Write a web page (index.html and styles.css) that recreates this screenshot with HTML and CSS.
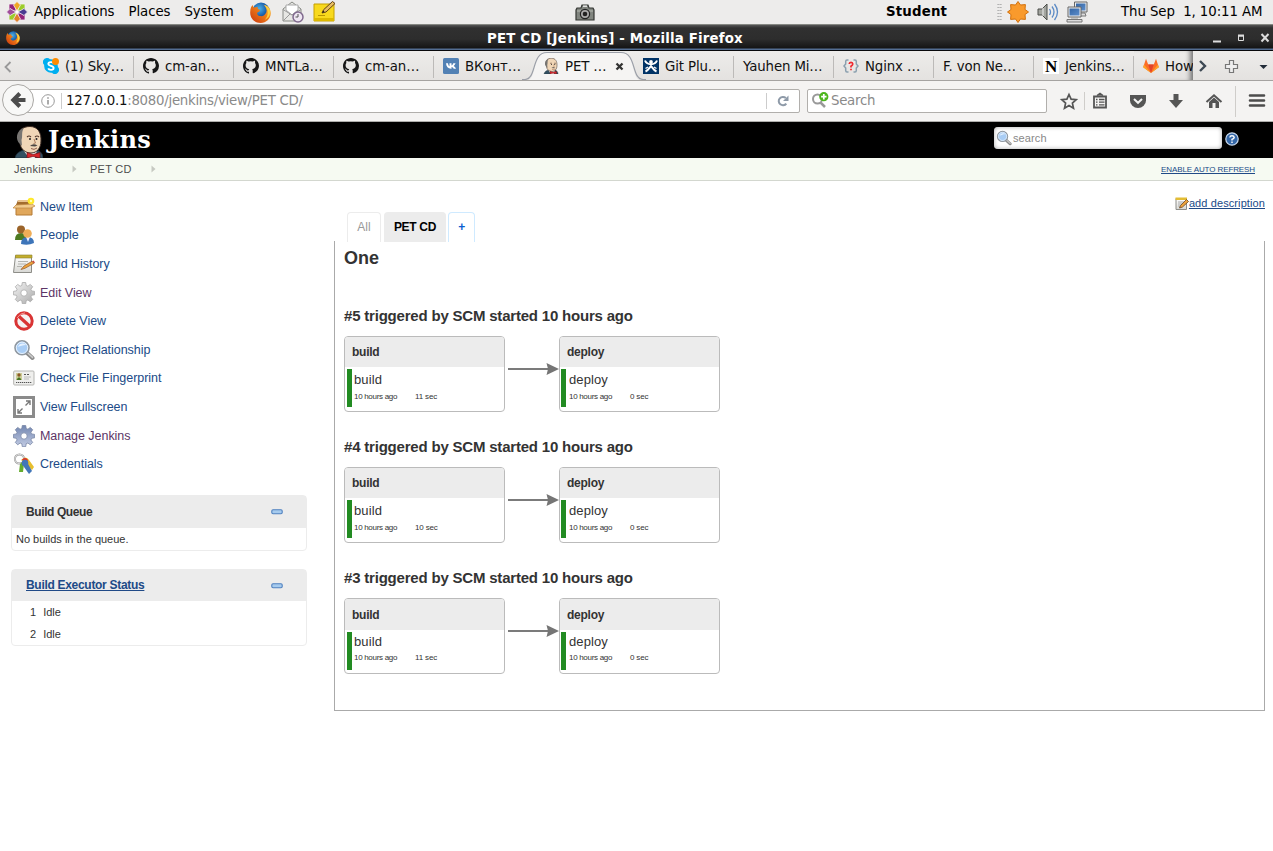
FILE: index.html
```html
<!DOCTYPE html>
<html lang="en">
<head>
<meta charset="utf-8">
<title>PET CD [Jenkins]</title>
<link rel="stylesheet" href="styles.css">
</head>
<body>
<svg class="defs" aria-hidden="true">
  <defs>
    <radialGradient id="flame" cx=".4" cy=".35" r=".7"><stop offset="0" stop-color="#4fb4e8"/><stop offset=".55" stop-color="#1c62ad"/><stop offset="1" stop-color="#123873"/></radialGradient>
    <linearGradient id="fox" x1="0" y1="1" x2="1" y2="0"><stop offset="0" stop-color="#c8330c"/><stop offset=".6" stop-color="#f08019"/><stop offset="1" stop-color="#ffdc50"/></linearGradient>
    <linearGradient id="paper" x1="0" y1="0" x2="0" y2="1"><stop offset="0" stop-color="#fff"/><stop offset="1" stop-color="#d8d8d4"/></linearGradient>
    <linearGradient id="silver" x1="0" y1="0" x2="1" y2="1"><stop offset="0" stop-color="#f4f4f4"/><stop offset="1" stop-color="#aaa"/></linearGradient>
    <linearGradient id="steel" x1="0" y1="0" x2="0" y2="1"><stop offset="0" stop-color="#7286b0"/><stop offset="1" stop-color="#c3cce4"/></linearGradient>
    <linearGradient id="screen" x1="0" y1="0" x2="1" y2="1"><stop offset="0" stop-color="#3465a4"/><stop offset="1" stop-color="#5d8ecb"/></linearGradient>
    <symbol id="firefox" viewBox="0 0 20 20">
      <circle cx="10.5" cy="9" r="8.5" fill="url(#flame)"/>
      <path d="M1 5 2.4 2.8 3.4 5.2 7.6 4.8C6.5 6.5 8.3 7.2 9.6 7.5L8.8 9.2C6 9.5 6.2 12.5 9.4 13.4 12.5 14 14 12.5 15.5 10 16.4 7 15 4.5 13 2.5 17 3.3 20 6.5 19.8 11 19.5 16 15.5 20 10.2 20 4.5 20 .3 15.8.2 10.5.1 8.3.4 6.5 1 5z" fill="url(#fox)"/>
      <path d="M14 3C18 7 18 13 14 17 18.3 15.5 20 11 18.6 7.2 17.8 5 16 3.5 14 3z" fill="#ffd03c"/>
    </symbol>
    <symbol id="octocat" viewBox="0 0 16 16">
      <path fill="#161616" d="M8 0C3.58 0 0 3.58 0 8c0 3.54 2.29 6.53 5.47 7.59.4.07.55-.17.55-.38v-1.49C4 14.1 3.4 13.1 3.2 12.5c-.1-.3-.6-1-1-1.2-.3-.2-.7-.6 0-.6.6 0 1.1.6 1.2.8.7 1.2 1.9.9 2.3.7.1-.5.3-.9.5-1.1-1.8-.2-3.6-.9-3.6-4 0-.9.3-1.6.8-2.2-.1-.2-.4-1 .1-2.1 0 0 .7-.2 2.2.8a7.6 7.6 0 0 1 4 0c1.5-1 2.2-.8 2.2-.8.4 1.1.2 1.9.1 2.1.5.6.8 1.3.8 2.2 0 3.1-1.9 3.8-3.7 4 .3.2.6.7.6 1.5v2.2c0 .2.1.5.5.4A8 8 0 0 0 16 8c0-4.42-3.58-8-8-8z"/>
    </symbol>
    <symbol id="butler" viewBox="0 0 28 32">
      <path d="M0 32C1 27 5 25 9 24L23 24C27 27 28 29 28 32z" fill="#335061" stroke="#1d2d38" stroke-width=".8"/>
      <path d="M9 25 14 32 20 32 22 24z" fill="#fff"/>
      <path d="M5 15C1 4 8 .5 15 .5 23 .5 26.500 7 26 15 26 22 22 27 16 27 10 27 6 23 5 18z" fill="#f0d6b7" stroke="#3b2a22" stroke-width="1"/>
      <path d="M5 18C0 14 1 4 9 2 6 6 8 10 6.5 14L7 20z" fill="#777572"/>
      <path d="M12 11Q14 9 16 11M20 11Q22 9 24 11" fill="none" stroke="#54392c" stroke-width="1.1"/>
      <circle cx="15" cy="13" r="1" fill="#222"/><circle cx="21.5" cy="13" r="1" fill="#222"/>
      <path d="M19 13 20.5 17 18.5 17.5" fill="none" stroke="#ad7c5d"/>
      <path d="M15 20Q18 17 22.5 19.5L20 20.5z" fill="#4b4644"/>
      <path d="M16 22.5Q19 24.5 22 22" fill="none" stroke="#7b4236" stroke-width=".8"/>
      <path d="M12 26.500 18 28.500 25 26.500V32L18 30.500 12 32z" fill="#d8262c" stroke="#6d1417" stroke-width=".7"/>
    </symbol>
    <symbol id="gear" viewBox="0 0 22 22">
      <path d="M9.300.5h3.400l.5 3 1.700.7 2.400-1.800 2.400 2.400-1.800 2.400.7 1.700 3 .5v3.400l-3 .5-.7 1.700 1.800 2.400-2.400 2.400-2.400-1.800-1.700.7-.5 3H9.300l-.5-3-1.700-.7-2.400 1.800-2.400-2.400 1.800-2.400-.7-1.700-3-.5V9.400l3-.5.7-1.700L2.300 4.800l2.400-2.400 2.400 1.800 1.700-.7zM11 7.800a3.200 3.200 0 1 0 0 6.400 3.200 3.200 0 0 0 0-6.400z" fill-rule="evenodd"/>
    </symbol>
    <symbol id="lens" viewBox="0 0 22 22">
      <path d="M13.500 13.500 19.500 19" stroke="#8c8c8c" stroke-width="4" stroke-linecap="round"/>
      <path d="M14.500 13.800 19.500 18.400" stroke="#ccc" stroke-width="1.500" stroke-linecap="round"/>
      <circle cx="9" cy="8.800" r="7" fill="#a9cdf5" stroke="#8f979f" stroke-width="1.600"/>
      <circle cx="9" cy="8.800" r="5.700" fill="none" stroke="#e6f1fd" stroke-width="1"/>
      <path d="M5 8C6 4 11 3.500 13 6 10 6 7 7 5 8z" fill="#e4f1ff"/>
    </symbol>
    <symbol id="notepad" viewBox="0 0 22 22">
      <path d="M2.500 3h16v16.500h-18z" fill="url(#paper)" stroke="#8d8d88"/>
      <path d="M2.500 2h16.500v3h-16.500z" fill="#c4ae2d" stroke="#8b8031" stroke-width=".6"/>
      <path d="M5 8.500h10M5 11h8M4 13.500h5" stroke="#b4b4b0"/>
      <path d="M8 16.500 11 13 19 8.300 21 10.300 12 15.300z" fill="#eda33c" stroke="#91562a" stroke-width=".7"/>
      <path d="M19 8.300 20.500 7.500 22 9.500 21 10.300z" fill="#c94434"/>
    </symbol>
    <symbol id="minus" viewBox="0 0 12 6"><rect x=".8" y=".8" width="10.400" height="4" rx="1.200" fill="#a6cbee" stroke="#4f80bf" stroke-width="1.100"/></symbol>
    <symbol id="arrow" viewBox="0 0 54 14"><path d="M3 7h41" stroke="#7b7b7b" stroke-width="2"/><path d="M41.500 1 54 7 41.500 13 43 7z" fill="#757575"/></symbol>
    <symbol id="crumb" viewBox="0 0 5 8"><path d="M.5.500 4.500 4 .500 7.500z" fill="#c6c9c2"/></symbol>
  </defs>
</svg>

<header class="panel">
  <svg class="distro" viewBox="0 0 22 22"><g stroke="#f3eff3" stroke-width=".8"><path d="M3 3h7v7H3z" fill="#932279"/><path d="M12 3h7v7h-7z" fill="#9ccd2a"/><path d="M3 12h7v7H3z" fill="#9ccd2a"/><path d="M12 12h7v7h-7z" fill="#932279"/><path d="M11 .5 14.500 4 11 10 7.500 4z" fill="#efa724"/><path d="M11 21.500 14.500 18 11 12 7.500 18z" fill="#e2822c"/><path d="M.5 11 4 7.500 10 11 4 14.500z" fill="#a14f9b"/><path d="M21.500 11 18 7.500 12 11 18 14.500z" fill="#4b3b91"/></g><circle cx="11" cy="11" r="1.300" fill="#fff"/></svg>
  <nav class="panel-menu"><span>Applications</span><span>Places</span><span>System</span></nav>
  <svg class="launch-fox"><use href="#firefox"/></svg>
  <svg class="launch-mail" viewBox="0 0 22 22"><path d="M1 8 10 1 19 8V20H1z" fill="#e7e7e4" stroke="#888a85"/><path d="M4 9V4h12v5l-6 5z" fill="#fff" stroke="#aaa"/><path d="M1 8.500 10 14 19 8.500M1 20 8 13M19 20 12 13" fill="none" stroke="#999"/><circle cx="16" cy="16" r="5" fill="#eee6f2" stroke="#806a8e" stroke-width="1.500"/><path d="M16 13v3h-2.500" stroke="#555" fill="none"/></svg>
  <svg class="launch-note" viewBox="0 0 23 22"><path d="M1 3h20v17H1z" fill="#f8d91d" stroke="#c5a000"/><path d="M1 17h20v3H1z" fill="#ddb900"/><path d="M5 14.500H12" stroke="#b99600"/><path d="M9 12 10.500 8.800 19.500.500 22 2.500 13 11z" fill="#e7bd62" stroke="#614010" stroke-width="1"/><path d="M9 12 10.500 9.500 11.500 11z" fill="#222"/></svg>
  <svg class="camera" viewBox="0 0 20 18"><path d="M2 4h4l1-3h6l1 3h4l1 2v10H1V6z" fill="#81857f" stroke="#343633" stroke-width="1.200"/><path d="M2 7h16" stroke="#b7bab3"/><circle cx="10" cy="10" r="4.600" fill="#aaa" stroke="#222" stroke-width="1.200"/><circle cx="10" cy="10" r="2.300" fill="#222"/><path d="M8 2.200h4" stroke="#e4e4e4" stroke-width="1.500"/></svg>
  <b class="user">Student</b>
  <i class="grip"></i>
  <svg class="sun" viewBox="0 0 22 22"><path d="M11 .5 13.500 4 18.400 3.600 18 8.500 21.500 11 18 13.500 18.400 18.400 13.500 18 11 21.500 8.500 18 3.600 18.400 4 13.500.500 11 4 8.500 3.600 3.600 8.500 4z" fill="#f99a2c" stroke="#d2700b"/></svg>
  <svg class="volume" viewBox="0 0 22 20"><path d="M1 7h4l5-5v16l-5-5H1z" fill="#a3a59f" stroke="#4b4d49"/><path d="M6 6v8" stroke="#eee"/><path d="M12.500 7Q14.500 10 12.500 13M15 4.500Q19 10 15 15.500M17.500 2Q23.500 10 17.500 18" fill="none" stroke="#5b8ac5" stroke-width="1.300"/></svg>
  <svg class="network" viewBox="0 0 22 22"><path d="M8.500 1h12.500v10H8.500z" fill="#eee" stroke="#666"/><path d="M10 2.500h9.500v7H10z" fill="url(#screen)"/><path d="M14 12h5l1 3h-6z" fill="#ddd" stroke="#777"/><path d="M2 6h13v10H2z" fill="#eee" stroke="#666"/><path d="M3.500 7.500h10v7h-10z" fill="url(#screen)"/><path d="M5 17h7" stroke="#999"/><path d="M1 18.500h15v2.500H1z" fill="#ddd" stroke="#777"/></svg>
  <span class="clock">Thu Sep&nbsp; 1, 10:11 AM</span>
</header>

<div class="titlebar">
  <svg class="title-fox"><use href="#firefox"/></svg>
  <b>PET CD [Jenkins] - Mozilla Firefox</b>
  <svg class="win-buttons" viewBox="0 0 58 12"><path d="M1 9.500h8" stroke="#ddd" stroke-width="2"/><path d="M26.500 4h5v4.500h-5z" fill="none" stroke="#ddd" stroke-width="1"/><path d="M26 3.500h6" stroke="#ddd" stroke-width="2"/><path d="M49.500 2 56.500 9.500M56.500 2 49.500 9.500" stroke="#ddd" stroke-width="2"/></svg>
</div>

<div class="tabs">
  <div class="scroll-left"><svg width="8" height="12"><path d="M6.500 1 1.500 6l5 5" fill="none" stroke="#999" stroke-width="1.800"/></svg></div>
  <div class="tab"><svg viewBox="0 0 16 16"><path d="M4 0a4 4 0 0 1 3 1.200A7 7 0 0 1 14.800 9 4 4 0 0 1 9 14.800 7 7 0 0 1 1.200 7 4 4 0 0 1 4 0z" fill="#00aff0"/><path d="M10.800 5.500C10 3.500 5.300 3.600 5.300 6 5.300 8.300 10.600 7.500 10.600 10 10.600 12.400 6 12.400 5.200 10.300" fill="none" stroke="#fff" stroke-width="1.900"/><circle cx="12.500" cy="3.500" r="3.500" fill="#ff8c00"/></svg><span>(1) Sky…</span></div>
  <div class="tab"><svg><use href="#octocat"/></svg><span>cm-an…</span></div>
  <div class="tab"><svg><use href="#octocat"/></svg><span>MNTLa…</span></div>
  <div class="tab"><svg><use href="#octocat"/></svg><span>cm-an…</span></div>
  <div class="tab no-line"><svg viewBox="0 0 16 16"><rect width="16" height="16" rx="1.500" fill="#5281b4"/><path d="M3 5.300h2c.2 1.800.8 2.700 1.500 3V5.300h2v2.200C9.300 7.300 9.900 6.300 10.300 5.300h2.300c-.4 1.200-1.200 2.100-1.900 2.700.9.500 1.700 1.300 2.300 2.700h-2.300C10.200 9.800 9.500 9.100 8.500 9v1.700C5.300 11 3.300 8.900 3 5.300z" fill="#fff"/></svg><span>ВКонт…</span></div>
  <div class="tab active">
    <svg class="tab-shape" viewBox="0 0 124 30"><path d="M0 29.500H4C16 29.500 9 1.500 25 1.500H99C115 1.500 108 29.500 120 29.500H124V30H0z" fill="#f5f4f3"/><path d="M0 28.500H3C15 28 9 1.500 25 1.500H99C115 1.500 109 28 121 28.500H124" fill="none" stroke="#9b9fa8" stroke-width="1.200"/></svg>
    <svg class="fav"><use href="#butler"/></svg><span>PET …</span><svg class="close" viewBox="0 0 9 9"><path d="M1.500 1.500 7.500 7.500M7.500 1.500 1.500 7.500" stroke="#333" stroke-width="2.300"/></svg>
  </div>
  <div class="tab"><svg viewBox="0 0 16 16"><path d="M0 0h16v16H0z" fill="#003366"/><circle cx="8" cy="4" r="1.900" fill="#fff"/><path d="M2 2.500C4 7.500 12 7.500 14 2.500M2.500 13.500C5 12.500 6.500 10 8 8 9.500 10 11 12.500 13.500 13.500" fill="none" stroke="#fff" stroke-width="2"/><path d="M2.500 10.500 5 9M13.500 10.500 11 9" stroke="#fff" stroke-width="1.300"/></svg><span>Git Plu…</span></div>
  <div class="tab"><span>Yauhen Mi…</span></div>
  <div class="tab"><svg viewBox="0 0 16 16"><path d="M5.500 2H4Q2.700 2 2.700 3.500V6L1 8l1.700 2v2.500Q2.700 14 4 14h1.500M10.500 2H12q1.300 0 1.300 1.500V6L15 8l-1.700 2v2.500Q13.300 14 12 14h-1.500" fill="none" stroke="#8ba0af" stroke-width="1.500"/><path d="M6.200 6Q6.300 4.300 8 4.300T9.800 6Q9.700 7 8 8.200V9.500M8 10.800v1.500" fill="none" stroke="#f1272e" stroke-width="1.700"/></svg><span>Nginx …</span></div>
  <div class="tab"><span>F. von Ne…</span></div>
  <div class="tab"><i class="n-icon">N</i><span>Jenkins…</span></div>
  <div class="tab clipped"><svg viewBox="0 0 16 16"><path d="M8 15 .200 9.300 3 .8 5.200 6.500h5.600L13 .8 15.800 9.300z" fill="#fc6d26"/><path d="M8 15 5.200 6.500h5.600z" fill="#e24329"/><path d="M8 15 .200 9.300 1 6.500zM8 15l7.800-5.700-.8-2.800z" fill="#fca326"/></svg><span>How</span></div>
  <div class="tab-tools">
    <svg width="80" height="20" viewBox="0 0 80 20"><path d="M7 5 12 10 7 15" fill="none" stroke="#3d4853" stroke-width="2.400"/><path d="M36.500 4.500h4v4h4v4h-4v4h-4v-4h-4v-4h4z" fill="#eee" stroke="#777" stroke-width="1.200"/><path d="M66.500 9h8l-4 4z" fill="#222c38"/></svg>
  </div>
</div>

<div class="navbar">
  <svg class="back" viewBox="0 0 34 34"><circle cx="16" cy="16" r="15.500" fill="#f8f8f7" stroke="#aaa8a5"/><path d="M17.800 9.500 11.300 16l6.500 6.500M12.500 16H23.500" fill="none" stroke="#4c4c4c" stroke-width="4"/></svg>
  <div class="urlbar">
    <svg class="info" viewBox="0 0 14 14"><circle cx="7" cy="7" r="6.300" fill="none" stroke="#999"/><path d="M7 6v4.500M7 3.300v1.500" stroke="#888" stroke-width="1.400"/></svg>
    <span class="url"><b>127.0.0.1</b>:8080/jenkins/view/PET CD/</span>
    <svg class="reload" viewBox="0 0 12 12"><path d="M9.300 8.600A4.200 4.200 0 1 1 8.800 3" fill="none" stroke="#8e9aa8" stroke-width="2"/><path d="M11.500.500V6H6z" fill="#8e9aa8"/></svg>
  </div>
  <div class="searchbar"><svg viewBox="0 0 18 18"><circle cx="6.500" cy="7" r="4.500" fill="none" stroke="#999" stroke-width="2"/><path d="M9.500 10.500 14 15" stroke="#999" stroke-width="2.500"/><circle cx="12.800" cy="4.700" r="4.600" fill="#4cb61c"/><path d="M12.800 2v5.400M10.100 4.700h5.400" stroke="#fff" stroke-width="1.700"/></svg>Search</div>
  <svg class="toolbar-icons" viewBox="0 0 213 36">
    <path d="M13 11.500 15.100 16.200 20.200 16.700 16.400 20.100 17.500 25.200 13 22.600 8.500 25.200 9.600 20.100 5.800 16.700 10.900 16.200z" fill="none" stroke="#555" stroke-width="1.700"/>
    <path d="M28.500 9v18M179.500 3v31" stroke="#cfcdca"/>
    <path d="M38 13.500h12v11H38z" fill="#f4f3f2" stroke="#555" stroke-width="1.800"/><path d="M41 12.500 44 10.500 47 12.500" fill="#555" stroke="#555" stroke-width="1.500"/><path d="M40 16.500h1.500M43 16.500h5.500M40 19.200h1.500M43 19.200h5.500M40 21.900h1.500M43 21.900h5.500" stroke="#555" stroke-width="1.300"/>
    <path d="M74 12h16v5.500a8 7.500 0 0 1-16 0z" fill="#555"/><path d="M78 16 82 19.800 86 16" fill="none" stroke="#f4f4f4" stroke-width="2"/>
    <path d="M117.500 11h5v6h4.500L120 25l-7-8h4.500z" fill="#555"/>
    <path d="M150.500 19 158 12.300 165.500 19" fill="none" stroke="#555" stroke-width="2"/><path d="M153 19 158 14.500 163 19V25h-3.500v-5h-3V25H153z" fill="#555"/>
    <path d="M194 12.500h14M194 17.500h14M194 22.500h14" stroke="#4c4c4c" stroke-width="2.600" stroke-linecap="round"/>
  </svg>
</div>

<div class="jenkins-header">
  <svg class="logo"><use href="#butler"/></svg><span class="wordmark">Jenkins</span>
  <div class="jsearch"><svg><use href="#lens"/></svg>search</div>
  <svg class="help" viewBox="0 0 14 14"><circle cx="7" cy="7" r="6.200" fill="#3568a8" stroke="#c8d8ec" stroke-width="1.200"/><path d="M4.800 5.500Q5 3.700 7 3.700T9.200 5.400Q9.100 6.500 7 7.300V8.500M7 9.400v1.500" fill="none" stroke="#fff" stroke-width="1.400"/></svg>
</div>
<div class="breadcrumbs">
  <span>Jenkins</span><svg><use href="#crumb"/></svg><span class="crumb-two">PET CD</span><svg><use href="#crumb"/></svg>
  <a class="refresh">ENABLE AUTO REFRESH</a>
</div>

<div class="page">
  <aside>
    <nav class="tasks">
      <a><svg viewBox="0 0 22 22"><path d="M3 9h16v10H3z" fill="#e0a75b" stroke="#b57a34"/><path d="M3 9 5 4h12l2 5z" fill="#a36c2e"/><path d="M3 9 0 12h18l4-2-3-2z" fill="#f2cb8e" stroke="#bd8744" stroke-width=".7"/><path d="M5 5h10" stroke="#e9c38e" stroke-width="2"/><circle cx="18" cy="5" r="3.300" fill="#ffe92b"/><circle cx="18" cy="5" r="1.200" fill="#fffcc0"/></svg>New Item</a>
      <a><svg viewBox="0 0 22 22"><path d="M2 16Q2 9 8 9t7 7z" fill="#4d7a21"/><circle cx="8" cy="5.500" r="4" fill="#9b642a"/><path d="M8 20Q8 13 14.500 13T21 19Q15 22 8 20z" fill="#3d75b9"/><path d="M13 13h4l-2 5z" fill="#eef"/><circle cx="14.500" cy="9.500" r="4.300" fill="#efad57"/></svg>People</a>
      <a><svg><use href="#notepad"/></svg>Build History</a>
      <a class="visited"><svg fill="url(#silver)" stroke="#aaa" stroke-width=".8"><use href="#gear"/></svg>Edit View</a>
      <a><svg viewBox="0 0 22 22"><circle cx="11" cy="11" r="8.200" fill="#f5f2f2" stroke="#d93434" stroke-width="3"/><path d="M5.500 6 16.500 16" stroke="#d93434" stroke-width="3.200"/><path d="M4 8Q7 3 12 2.800" fill="none" stroke="#f49b98"/></svg>Delete View</a>
      <a><svg><use href="#lens"/></svg>Project Relationship</a>
      <a><svg viewBox="0 0 22 22"><rect x=".7" y="4" width="20.300" height="14" rx="1" fill="#efefed" stroke="#b5b5b2"/><path d="M3 6h6v7H3z" fill="#cecf9a"/><circle cx="6" cy="8" r="1.700" fill="#8a5928"/><path d="M3.500 13Q6 7.500 8.500 13z" fill="#477323"/><path d="M11 7.500h6" stroke="#555" stroke-dasharray="2 1"/><path d="M11 10h7M11 12h5" stroke="#bbb"/><path d="M3 15.500h16" stroke="#555" stroke-width="1" stroke-dasharray="1.300 .7"/></svg>Check File Fingerprint</a>
      <a><svg viewBox="0 0 22 22"><path d="M1.500 1.500h19v19h-19z" fill="#fff" stroke="#8b8b8b" stroke-width="3"/><path d="M12.500 9.500 17 5M13 5h4v4M9.500 12.500 5 17M9 17H5v-4" fill="none" stroke="#777" stroke-width="1.400"/></svg>View Fullscreen</a>
      <a class="visited"><svg fill="url(#steel)" stroke="#7785a5" stroke-width=".8"><use href="#gear"/></svg>Manage Jenkins</a>
      <a><svg viewBox="0 0 22 22"><circle cx="6.500" cy="6" r="4.600" fill="none" stroke="#999" stroke-width="2"/><circle cx="6.500" cy="6" r="4.600" fill="none" stroke="#e6e6e6" stroke-width=".9"/><path d="M8 7Q13 2 16 7L21 14 19 17 14 12z" fill="#e7bf2f"/><path d="M9 6.500Q13 3.500 15 7l-2 4z" fill="#d9342b"/><path d="M9 9 11 11 10 19H6l1-8z" fill="#65ac2e"/><circle cx="12" cy="10" r="3.300" fill="#4276b8"/><path d="M10 11 14.500 10 19 18 16 21 11 14z" fill="#4276b8"/></svg>Credentials</a>
    </nav>
    <section class="pane">
      <h3><span>Build Queue</span><svg><use href="#minus"/></svg></h3>
      <div class="queue">No builds in the queue.</div>
    </section>
    <section class="pane executors">
      <h3><a>Build Executor Status</a><svg><use href="#minus"/></svg></h3>
      <div class="executor"><span>1</span><span>Idle</span></div>
      <div class="executor"><span>2</span><span>Idle</span></div>
    </section>
  </aside>
  <main>
    <div class="description"><svg viewBox="0 0 14 14"><path d="M1 1.500h10.500v11H1z" fill="url(#paper)" stroke="#8d8d88"/><path d="M.500.500h11.500v2.500H.5z" fill="#e3bd35"/><path d="M3 5h6M3 7h4M3 9h2" stroke="#aaa"/><path d="M4.500 11 5.500 8.500 11.500 2.500 13.500 4.500 7.500 10z" fill="#eda33c" stroke="#6b451f" stroke-width=".8"/></svg><a>add description</a></div>
    <div class="view-tabs"><span>All</span><b>PET CD</b><b class="plus">+</b></div>
    <div class="view">
      <h1>One</h1>
      <section class="run">
        <h2>#5 triggered by SCM started 10 hours ago</h2>
        <div class="stages">
          <div class="stage"><h4>build</h4><div class="job"><p>build</p><small><span>10 hours ago</span><span>11 sec</span></small></div></div>
          <svg class="arrow"><use href="#arrow"/></svg>
          <div class="stage"><h4>deploy</h4><div class="job"><p>deploy</p><small><span>10 hours ago</span><span>0 sec</span></small></div></div>
        </div>
      </section>
      <section class="run">
        <h2>#4 triggered by SCM started 10 hours ago</h2>
        <div class="stages">
          <div class="stage"><h4>build</h4><div class="job"><p>build</p><small><span>10 hours ago</span><span>10 sec</span></small></div></div>
          <svg class="arrow"><use href="#arrow"/></svg>
          <div class="stage"><h4>deploy</h4><div class="job"><p>deploy</p><small><span>10 hours ago</span><span>0 sec</span></small></div></div>
        </div>
      </section>
      <section class="run">
        <h2>#3 triggered by SCM started 10 hours ago</h2>
        <div class="stages">
          <div class="stage"><h4>build</h4><div class="job"><p>build</p><small><span>10 hours ago</span><span>11 sec</span></small></div></div>
          <svg class="arrow"><use href="#arrow"/></svg>
          <div class="stage"><h4>deploy</h4><div class="job"><p>deploy</p><small><span>10 hours ago</span><span>0 sec</span></small></div></div>
        </div>
      </section>
    </div>
  </main>
</div>
</body>
</html>
```
FILE: styles.css
```css
* { box-sizing: border-box; }
body { margin: 0; width: 1273px; height: 851px; overflow: hidden; background: #fff; color: #333; font-family: "Liberation Sans", Arial, sans-serif; }
svg { display: block; flex: none; }
.defs { position: absolute; width: 0; height: 0; }
h1, h2, h3, h4, p { margin: 0; }
i { font-style: normal; }

/* Desktop panel */
.panel { display: flex; align-items: center; height: 25px; padding-left: 6px; background: #edeceb; border-bottom: 1px solid #858782; color: #000; font: 13.33px/22px "DejaVu Sans", sans-serif; letter-spacing: -.08px; white-space: nowrap; }
.distro { width: 22px; height: 22px; }
.panel-menu { display: flex; gap: 14px; width: 199px; margin-left: 6px; }
.launch-fox { width: 21px; height: 21px; margin: 0 11px 0 17px; }
.launch-mail { width: 22px; height: 22px; margin-right: 9px; }
.launch-note { width: 23px; height: 22px; }
.camera { width: 20px; height: 18px; margin-left: 239px; margin-top: 1px; }
.user { width: 62px; margin-left: 291px; letter-spacing: .17px; }
.grip { width: 5px; height: 18px; margin-left: 49px; background: radial-gradient(circle, #aaa 0 .7px, transparent 1px) 0 0 / 2.5px 3px; }
.sun { width: 22px; height: 22px; margin-left: 5px; }
.volume { width: 22px; height: 20px; margin-left: 8px; }
.network { width: 22px; height: 22px; margin-left: 7px; }
.clock { margin-left: 33px; }

/* Window title */
.titlebar { display: flex; align-items: center; height: 26px; padding-left: 6px; background: linear-gradient(#555 0, #303030 3px, #2d2d2d 14px, #151515 23px, #536d92 24px, #536d92 25px, #08090b 25px); color: #fff; font: 13.33px/20px "DejaVu Sans", sans-serif; }
.title-fox { width: 14px; height: 14px; }
.titlebar b { flex: 1; margin: 1px 0 0 -15px; padding-left: 482px; letter-spacing: .18px; white-space: nowrap; }
.win-buttons { width: 58px; height: 12px; margin-right: 3px; }

/* Browser tabs */
.tabs { display: flex; height: 30px; background: linear-gradient(#edecea, #e4e2e0); border-bottom: 1px solid #a5a3a1; font: 13.33px/30px "DejaVu Sans", sans-serif; letter-spacing: -.12px; color: #111; overflow: hidden; }
.scroll-left { width: 34px; padding: 10px 0 0 4px; }
.tab { position: relative; display: flex; align-items: center; gap: 6px; flex: none; width: 100px; padding: 1px 0 0 9px; white-space: nowrap; }
.tab::after { content: ""; position: absolute; right: 0; top: 5px; width: 1px; height: 22px; background: #bcbab8; }
.tab.active::after, .tab.no-line::after, .tab.clipped::after { display: none; }
.tab > svg { width: 16px; height: 16px; }
.tab span { position: relative; margin-top: 1px; }
.tab > .tab-shape { position: absolute; left: -12px; top: 0; width: 124px; height: 30px; }
.tab .fav { position: relative; }
.tab .close { position: relative; width: 9px; height: 9px; margin-left: 2px; }
.n-icon { width: 16px; height: 16px; background: #fff; color: #000; font: bold 17px/17px "Liberation Serif", serif; text-align: center; }
.tab.clipped { width: 59px; overflow: hidden; box-shadow: inset -6px 0 5px -3px #777; }
.tab-tools { width: 80px; padding-top: 5px; }

/* Address bar */
.navbar { display: flex; align-items: center; height: 41px; background: #f4f3f2; border-bottom: 1px solid #aeadab; font: 13.33px/22px "DejaVu Sans", sans-serif; letter-spacing: -.27px; color: #8a8a8a; }
.back { position: relative; z-index: 1; width: 34px; height: 34px; margin-left: 2px; }
.urlbar { display: flex; align-items: center; width: 782px; height: 24px; margin-left: -18px; padding-left: 22px; background: #fff; border: 1px solid #b1afac; border-radius: 2px; }
.info { width: 14px; height: 14px; margin-right: 6px; }
.url { flex: 1; height: 16px; line-height: 16px; padding-left: 4px; border-left: 1px solid #ccc; border-right: 1px solid #ccc; }
.url b { font-weight: normal; color: #111; }
.reload { width: 12px; height: 12px; margin: 0 10px; }
.searchbar { display: flex; align-items: center; gap: 2px; width: 240px; height: 24px; margin-left: 7px; padding-left: 3px; background: #fff; border: 1px solid #b1afac; border-radius: 2px; }
.searchbar svg { width: 18px; height: 18px; }
.toolbar-icons { width: 213px; height: 36px; margin-left: 9px; }

/* Jenkins header */
.jenkins-header { display: flex; height: 36px; background: #000; overflow: hidden; }
.logo { width: 28px; height: 32px; margin: 4px 0 0 15px; }
.wordmark { flex: 1; margin-left: 5px; color: #fff; font: bold 24px/35px "DejaVu Serif", serif; letter-spacing: .35px; }
.jsearch { display: flex; align-items: center; width: 228px; height: 22px; margin-top: 5px; padding-left: 2px; gap: 1px; background: #fff; border-radius: 4px; box-shadow: inset 0 0 4px #aaa; color: #888; font-size: 11px; letter-spacing: .1px; }
.jsearch svg { width: 16px; height: 16px; }
.help { width: 14px; height: 14px; margin: 10px 34px 0 3px; }
.breadcrumbs { display: flex; align-items: center; height: 23px; padding-left: 14px; background: #f6faf2; border-bottom: 1px solid #d3d7cf; color: #4d4d4d; font-size: 11px; letter-spacing: .25px; }
.breadcrumbs span { width: 58px; }
.breadcrumbs .crumb-two { width: 61px; margin-left: 13px; }
.breadcrumbs svg { width: 5px; height: 8px; }
.refresh { margin: 0 18px 0 auto; font-size: 8px; letter-spacing: -.1px; color: #204a87; text-decoration: underline; }

/* Sidebar */
.page { display: flex; }
aside { width: 334px; padding: 11.6px 0 0 11px; }
.tasks a { display: flex; align-items: center; height: 28.6px; padding-left: 2px; gap: 5px; color: #204a87; font-size: 12.5px; letter-spacing: -.04px; }
.tasks a.visited { color: #5c3566; }
.tasks svg { width: 22px; height: 22px; }
.pane { width: 296px; height: 56px; margin-top: 16.4px; border: 1px solid #ececec; border-radius: 4px; font-size: 11px; }
.pane h3 { display: flex; align-items: center; justify-content: space-between; height: 32px; padding: 0 23px 0 14px; background: #ececec; font-size: 12px; letter-spacing: -.4px; }
.pane h3 svg { width: 12px; height: 6px; margin-top: 1px; }
.pane h3 a { color: #204a87; letter-spacing: -.3px; text-decoration: underline; }
.queue { padding: 5px 4px; }
.executors { height: 77px; margin-top: 18px; }
.executors h3 { height: 31px; }
.executor { display: flex; gap: 7px; height: 22px; padding-left: 18px; line-height: 23px; }

/* View */
main { width: 931px; }
.description { display: flex; align-items: center; justify-content: flex-end; height: 31px; padding-top: 14px; font-size: 11px; letter-spacing: .1px; }
.description svg { width: 14px; height: 14px; margin-top: 1px; }
.description a { margin-top: -1px; color: #204a87; text-decoration: underline; }
.view-tabs { position: relative; display: flex; height: 29px; margin-left: 13px; font-size: 12px; line-height: 29px; text-align: center; }
.view-tabs > * { height: 30px; border: 1px solid #ececec; border-bottom: 0; border-radius: 4px 4px 0 0; }
.view-tabs span { width: 34px; margin-right: 3px; color: #999; }
.view-tabs b { width: 62px; margin-right: 2px; background: #ececec; color: #000; letter-spacing: -.3px; }
.view-tabs .plus { width: 27px; background: #fff; color: #0b5ed0; border-color: #cfeaff; }
.view { height: 470px; padding: 6px 9px; border: 1px solid #aaa; border-top: 0; }
.view h1 { height: 56px; font-size: 18px; line-height: 22px; }
.run { height: 131px; }
.run h2 { height: 33px; font-size: 15px; line-height: 26px; letter-spacing: -.2px; white-space: nowrap; }
.stages { display: flex; }
.stage { width: 161px; height: 76px; border: 1px solid #bbb; border-radius: 4px; overflow: hidden; }
.stage h4 { height: 30px; padding-left: 7px; background: #ececec; font-size: 12px; line-height: 30px; letter-spacing: -.25px; }
.run:last-child h4 { height: 31px; line-height: 32px; }
.run:last-child p { line-height: 19px; }
.job { height: 38px; margin: 2px 0 0 2px; padding-left: 2px; border-left: 5px solid #228b22; }
.arrow + .stage .job { margin-left: 1px; padding-left: 3px; }
.job p { font-size: 13px; line-height: 21px; letter-spacing: .1px; }
.job small { display: flex; font-size: 8px; line-height: 13px; letter-spacing: -.3px; }
.job small span:first-child { width: 61px; }
.job small span:last-child { letter-spacing: -.15px; }
.arrow { width: 54px; height: 14px; margin-top: 26px; }
```
